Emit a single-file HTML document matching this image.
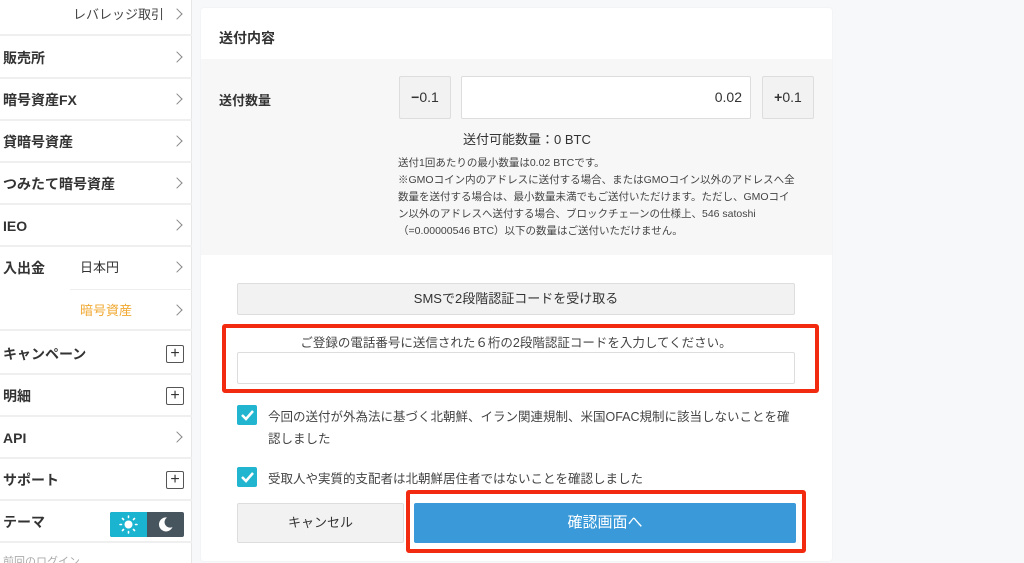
<!DOCTYPE html>
<html><head><meta charset="utf-8">
<style>
*{box-sizing:border-box;margin:0;padding:0}
html,body{width:1024px;height:563px;overflow:hidden}
body{background:#f7f8fa;font-family:"Liberation Sans","Noto Sans CJK JP",sans-serif;color:#333;position:relative}
.abs{position:absolute}
#side{position:absolute;left:0;top:0;width:192px;height:563px;background:#fff;border-right:1px solid #e6e6e6}
.row{position:absolute;left:0;width:192px;height:42px;border-bottom:2px solid #efefef;font-size:14px;font-weight:bold;color:#333;line-height:42px;padding-left:3px}
.arr{position:absolute;right:11px;top:16px;width:8px;height:8px;border-right:1px solid #888;border-top:1px solid #888;transform:rotate(45deg)}
.plus{position:absolute;right:8px;top:12px;width:18px;height:18px;border:1px solid #555;border-radius:2px;font-weight:normal;line-height:15px;text-align:center;font-size:16px;color:#333}
#card{position:absolute;left:201px;top:8px;width:631px;height:553px;background:#fff;border-radius:3px;box-shadow:0 0 2px rgba(0,0,0,.05)}
.btn{position:absolute;background:#f2f2f2;border:1px solid #ddd;border-radius:2px;text-align:center;color:#333}
.red{position:absolute;border:4px solid #f22a0f;border-radius:3px}
.cb{position:absolute;width:20px;height:20px;background:#22b5cf;border-radius:2px}
</style></head><body>
<div id="side">
 <div class="row" style="top:-6px;height:42px;font-weight:normal;font-size:13px;text-align:right;padding-right:28px;color:#444">レバレッジ取引<span class="arr"></span></div>
 <div class="row" style="top:37px">販売所<span class="arr"></span></div>
 <div class="row" style="top:79px">暗号資産FX<span class="arr"></span></div>
 <div class="row" style="top:121px">貸暗号資産<span class="arr"></span></div>
 <div class="row" style="top:163px">つみたて暗号資産<span class="arr"></span></div>
 <div class="row" style="top:205px">IEO<span class="arr"></span></div>
 <div class="row" style="top:247px;border:none">入出金<span style="position:absolute;left:80px;font-weight:normal;font-size:13px">日本円</span><span class="arr"></span></div>
 <div class="abs" style="left:70px;top:289px;width:122px;border-top:1px solid #eee"></div>
 <div class="row" style="top:290px;height:41px"><span style="position:absolute;left:80px;font-weight:normal;font-size:13px;color:#f0a830">暗号資産</span><span class="arr"></span></div>
 <div class="row" style="top:333px">キャンペーン<span class="plus">+</span></div>
 <div class="row" style="top:375px">明細<span class="plus">+</span></div>
 <div class="row" style="top:417px">API<span class="arr"></span></div>
 <div class="row" style="top:459px">サポート<span class="plus">+</span></div>
 <div class="row" style="top:501px">テーマ
  <div class="abs" style="left:110px;top:11px;width:74px;height:25px;border-radius:2px;overflow:hidden;background:#47555f">
   <div class="abs" style="left:0;top:0;width:37px;height:25px;background:#1ab3d0"></div>
   <svg class="abs" style="left:9px;top:3px" width="19" height="19" viewBox="0 0 19 19"><circle cx="9.5" cy="9.5" r="4" fill="#fff"/><g stroke="#fff" stroke-width="1.6" stroke-linecap="round"><path d="M9.5 1v1.5M9.5 16.5V18M1 9.5h1.5M16.5 9.5H18M3.5 3.5l1 1M14.5 14.5l1 1M3.5 15.5l1-1M14.5 4.5l1-1"/></g></svg>
   <svg class="abs" style="left:47px;top:4px" width="17" height="17" viewBox="0 0 17 17"><path d="M10 1.5A7 7 0 1 0 15.5 11 5.5 5.5 0 0 1 10 1.5z" fill="#fff"/></svg>
  </div>
 </div>
 <div class="abs" style="left:3px;top:553px;font-size:11px;color:#aaa">前回のログイン</div>
</div>

<div id="card">
 <div class="abs" style="left:18px;top:20px;font-size:14px;font-weight:bold">送付内容</div>
 <div class="abs" style="left:0;top:51px;width:631px;height:196px;background:#f7f7f7"></div>
 <div class="abs" style="left:18px;top:82px;font-size:13px;font-weight:bold">送付数量</div>
 <div class="btn" style="left:198px;top:68px;width:52px;height:43px;line-height:41px;font-size:14px"><b>−</b>0.1</div>
 <div class="abs" style="left:260px;top:68px;width:290px;height:43px;background:#fff;border:1px solid #ddd;border-radius:2px;text-align:right;padding-right:8px;line-height:41px;font-size:14px">0.02</div>
 <div class="btn" style="left:561px;top:68px;width:52px;height:43px;line-height:41px;font-size:14px"><b>+</b>0.1</div>
 <div class="abs" style="left:262px;top:121px;font-size:13px">送付可能数量：0 BTC</div>
 <div class="abs" style="left:197px;top:147px;width:410px;font-size:10.5px;line-height:17px;color:#444">送付1回あたりの最小数量は0.02 BTCです。<br>※GMOコイン内のアドレスに送付する場合、またはGMOコイン以外のアドレスへ全<br>数量を送付する場合は、最小数量未満でもご送付いただけます。ただし、GMOコイ<br>ン以外のアドレスへ送付する場合、ブロックチェーンの仕様上、546 satoshi<br>（=0.00000546 BTC）以下の数量はご送付いただけません。</div>
 <div class="btn" style="left:36px;top:275px;width:558px;height:32px;line-height:30px;font-size:13px">SMSで2段階認証コードを受け取る</div>
 <div class="red" style="left:21px;top:316px;width:597px;height:69px"></div>
 <div class="abs" style="left:36px;top:324px;width:558px;text-align:center;font-size:12.5px;color:#444">ご登録の電話番号に送信された６桁の2段階認証コードを入力してください。</div>
 <div class="abs" style="left:36px;top:344px;width:558px;height:32px;border:1px solid #ddd;border-radius:2px;background:#fff"></div>
 <div class="cb" style="left:36px;top:397px"><svg width="20" height="20"><path d="M5 10l4 4 7-8" stroke="#fff" stroke-width="2.5" fill="none"/></svg></div>
 <div class="abs" style="left:67px;top:398px;width:530px;font-size:12.5px;line-height:22px;color:#444">今回の送付が外為法に基づく北朝鮮、イラン関連規制、米国OFAC規制に該当しないことを確認しました</div>
 <div class="cb" style="left:36px;top:459px"><svg width="20" height="20"><path d="M5 10l4 4 7-8" stroke="#fff" stroke-width="2.5" fill="none"/></svg></div>
 <div class="abs" style="left:67px;top:460px;font-size:12.5px;line-height:22px;color:#444">受取人や実質的支配者は北朝鮮居住者ではないことを確認しました</div>
 <div class="btn" style="left:36px;top:495px;width:167px;height:40px;line-height:38px;font-size:13px">キャンセル</div>
 <div class="red" style="left:205px;top:482px;width:400px;height:63px"></div>
 <div class="abs" style="left:213px;top:495px;width:382px;height:40px;background:#3a9ad9;border-radius:2px;color:#fff;text-align:center;line-height:40px;font-size:15px">確認画面へ</div>
</div>
</body></html>
